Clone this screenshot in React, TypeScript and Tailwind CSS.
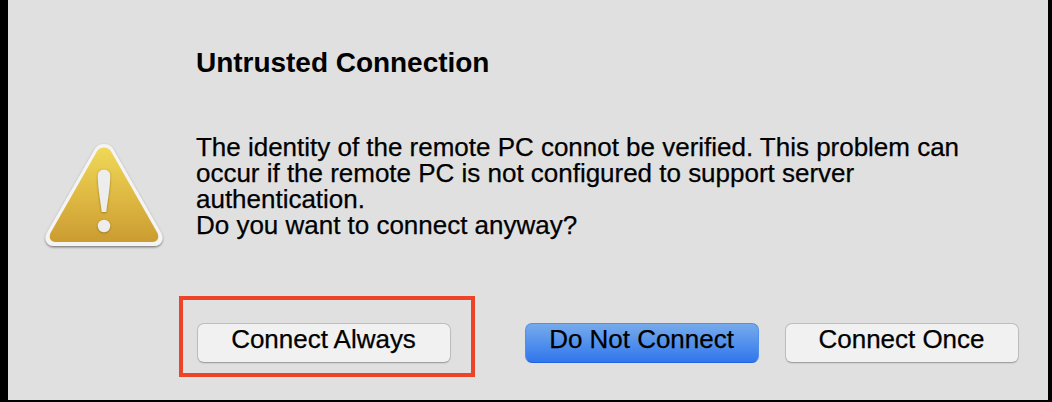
interface ButtonProps {
  label: string;
  primary?: boolean;
  className: string;
}

function WarningIcon() {
  return (
    <svg width="126" height="116" viewBox="41 138 126 116" aria-label="Warning">
      <defs>
        <linearGradient id="gold" x1="0" y1="0" x2="0" y2="1">
          <stop offset="0" stopColor="#efd858" />
          <stop offset="0.5" stopColor="#dfba43" />
          <stop offset="1" stopColor="#cb9c31" />
        </linearGradient>
        <filter id="shadow" x="-10%" y="-10%" width="120%" height="120%">
          <feDropShadow dx="0" dy="1.2" stdDeviation="1.1" floodColor="#000" floodOpacity="0.5" />
        </filter>
        <filter id="markShadow" x="-30%" y="-10%" width="160%" height="120%">
          <feDropShadow dx="0" dy="0.7" stdDeviation="1" floodColor="#77580f" floodOpacity="0.7" />
        </filter>
      </defs>
      <path
        d="M94.5 149.5C98.5 142.2 109.5 142.2 113.5 149.5L161 232.5C165 240 160.5 246 154 246H54C47.5 246 43 240 47 232.5Z"
        fill="#f4f4f4"
        filter="url(#shadow)"
      />
      <path
        d="M97.2 151C100 146.3 108 146.3 110.8 151L157.2 232.5C159.8 237.5 157.5 242 152.5 242H55.5C50.5 242 48.2 237.5 50.8 232.5Z"
        fill="url(#gold)"
      />
      <g fill="#ededed" filter="url(#markShadow)">
        <path d="M97.8 175.5C97.8 167.7 110.2 167.7 110.2 175.5C110.2 187 107.5 201 106.2 212H101.8C100.5 201 97.8 187 97.8 175.5Z" />
        <circle cx="104" cy="226" r="6.2" />
      </g>
    </svg>
  );
}

function DialogButton({ label, primary, className }: ButtonProps) {
  return (
    <button
      className={`h-10 rounded-[7px] border pr-px pb-[7px] text-[26px] leading-[29px] tracking-[-0.02px] whitespace-nowrap ${
        primary
          ? 'border-[#4f91e8] border-b-[#2065df] bg-linear-to-b from-[#76aaeb] to-[#3075ec]'
          : 'border-[#bdbdbd] border-b-[#a3a3a3] bg-[#f1f1f1] shadow-[0_1px_1px_rgba(0,0,0,0.08)]'
      } ${className}`}
    >
      {label}
    </button>
  );
}

export default function App() {
  return (
    <div className="h-[402px] w-[1052px] bg-black pr-1 pb-0.5 pl-2 font-['Liberation_Sans',Arial,sans-serif] text-black [-webkit-text-stroke:0.25px_black]">
      <div className="flex h-[400px] bg-[#e0e0e0]" role="dialog">
        <div className="w-[188px] shrink-0 pt-[138px] pl-[33px]">
          <WarningIcon />
        </div>
        <div className="flex flex-1 flex-col">
          <h1 className="mt-12 text-[28px] leading-[30px] font-bold tracking-[-0.03px] [-webkit-text-stroke:0]">
            Untrusted Connection
          </h1>
          <div className="mt-14 text-[26px] leading-[26px] tracking-[-0.015px] whitespace-nowrap">
            <p>The identity of the remote PC connot be verified. This problem can</p>
            <p>occur if the remote PC is not configured to support server</p>
            <p>authentication.</p>
            <p>Do you want to connect anyway?</p>
          </div>
          <div className="mt-[85px] flex">
            <div className="relative ml-px flex">
              <DialogButton label="Connect Always" className="w-[254px]" />
              {/* highlight drawn around the option to pick */}
              <div className="pointer-events-none absolute -top-[27px] -left-[18px] h-[81px] w-[296px] border-4 border-[#ed4429]" />
            </div>
            <DialogButton label="Do Not Connect" primary className="ml-[74px] w-[234px]" />
            <DialogButton label="Connect Once" className="ml-[26px] w-[234px]" />
          </div>
        </div>
      </div>
    </div>
  );
}
